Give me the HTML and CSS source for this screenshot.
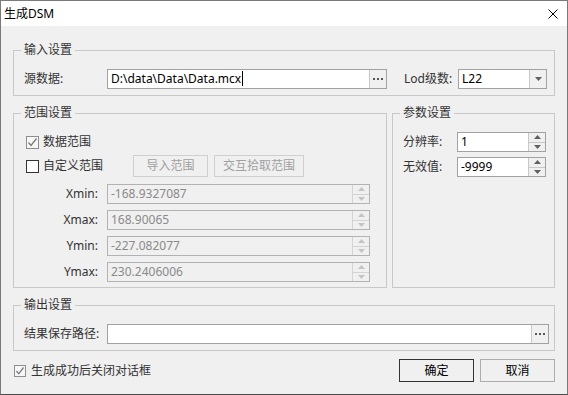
FILE: index.html
```html
<!DOCTYPE html>
<html lang="zh-CN">
<head>
  <meta charset="UTF-8" />
  <meta name="viewport" content="width=device-width, initial-scale=1.0"/>
  <title>生成DSM</title>
  <link rel="stylesheet" href="styles.css">
</head>
<body>
  <div class="window">
    <div class="titlebar">
      <span class="title">生成DSM</span>
      <svg class="close" width="10" height="10" viewBox="0 0 10 10">
        <path d="M0.5 0.5 L9.5 9.5 M9.5 0.5 L0.5 9.5" stroke="#000" stroke-width="1" fill="none"/>
      </svg>
    </div>

    <div class="content">
      <!-- 输入设置 -->
      <fieldset class="group group-input">
        <legend>输入设置</legend>
        <div class="row">
          <span class="lbl w83">源数据:</span>
          <div class="field file-field">
            <span class="text">D:\data\Data\Data.mcx<i class="caret"></i></span>
            <span class="side">
              <svg width="10" height="2" viewBox="0 0 10 2"><path d="M0 0h2v2H0zM4 0h2v2H4zM8 0h2v2H8z" fill="#555"/></svg>
            </span>
          </div>
          <span class="lbl lod">Lod级数:</span>
          <div class="field combo">
            <span class="text">L22</span>
            <span class="side">
              <svg width="7" height="4" viewBox="0 0 7 4"><path d="M0 0 L7 0 L3.5 4Z" fill="#606060"/></svg>
            </span>
          </div>
        </div>
      </fieldset>

      <div class="mid">
        <!-- 范围设置 -->
        <fieldset class="group group-range">
          <legend>范围设置</legend>
          <div class="check-row">
            <span class="check">
              <span class="box on">
                <svg width="11" height="11" viewBox="0 0 11 11"><polyline points="1.5,5.5 4,8.5 9.5,1.5" stroke="#7a7a7a" stroke-width="1.3" fill="none"/></svg>
              </span>
              数据范围
            </span>
          </div>
          <div class="check-row second">
            <span class="check custom">
              <span class="box"></span>
              自定义范围
            </span>
            <span class="btn off w75">导入范围</span>
            <span class="btn off w90">交互拾取范围</span>
          </div>

          <div class="coord-row">
            <span class="lbl coord">Xmin:</span>
            <div class="field off coord-field">
              <span class="text">-168.9327087</span>
              <span class="side spin">
                <span class="half"><svg width="7" height="4" viewBox="0 0 7 4"><path d="M0 4 L3.5 0 L7 4Z" fill="#c4c4c4"/></svg></span>
                <span class="half"><svg width="7" height="4" viewBox="0 0 7 4"><path d="M0 0 L7 0 L3.5 4Z" fill="#c4c4c4"/></svg></span>
              </span>
            </div>
          </div>
          <div class="coord-row">
            <span class="lbl coord">Xmax:</span>
            <div class="field off coord-field">
              <span class="text">168.90065</span>
              <span class="side spin">
                <span class="half"><svg width="7" height="4" viewBox="0 0 7 4"><path d="M0 4 L3.5 0 L7 4Z" fill="#c4c4c4"/></svg></span>
                <span class="half"><svg width="7" height="4" viewBox="0 0 7 4"><path d="M0 0 L7 0 L3.5 4Z" fill="#c4c4c4"/></svg></span>
              </span>
            </div>
          </div>
          <div class="coord-row">
            <span class="lbl coord">Ymin:</span>
            <div class="field off coord-field">
              <span class="text">-227.082077</span>
              <span class="side spin">
                <span class="half"><svg width="7" height="4" viewBox="0 0 7 4"><path d="M0 4 L3.5 0 L7 4Z" fill="#c4c4c4"/></svg></span>
                <span class="half"><svg width="7" height="4" viewBox="0 0 7 4"><path d="M0 0 L7 0 L3.5 4Z" fill="#c4c4c4"/></svg></span>
              </span>
            </div>
          </div>
          <div class="coord-row">
            <span class="lbl coord">Ymax:</span>
            <div class="field off coord-field">
              <span class="text">230.2406006</span>
              <span class="side spin">
                <span class="half"><svg width="7" height="4" viewBox="0 0 7 4"><path d="M0 4 L3.5 0 L7 4Z" fill="#c4c4c4"/></svg></span>
                <span class="half"><svg width="7" height="4" viewBox="0 0 7 4"><path d="M0 0 L7 0 L3.5 4Z" fill="#c4c4c4"/></svg></span>
              </span>
            </div>
          </div>
        </fieldset>

        <!-- 参数设置 -->
        <fieldset class="group group-param">
          <legend>参数设置</legend>
          <div class="param-row">
            <span class="lbl w54">分辨率:</span>
            <div class="field spin-field">
              <span class="text">1</span>
              <span class="side spin">
                <span class="half"><svg width="7" height="4" viewBox="0 0 7 4"><path d="M0 4 L3.5 0 L7 4Z" fill="#606060"/></svg></span>
                <span class="half"><svg width="7" height="4" viewBox="0 0 7 4"><path d="M0 0 L7 0 L3.5 4Z" fill="#606060"/></svg></span>
              </span>
            </div>
          </div>
          <div class="param-row">
            <span class="lbl w54">无效值:</span>
            <div class="field spin-field">
              <span class="text">-9999</span>
              <span class="side spin">
                <span class="half"><svg width="7" height="4" viewBox="0 0 7 4"><path d="M0 4 L3.5 0 L7 4Z" fill="#606060"/></svg></span>
                <span class="half"><svg width="7" height="4" viewBox="0 0 7 4"><path d="M0 0 L7 0 L3.5 4Z" fill="#606060"/></svg></span>
              </span>
            </div>
          </div>
        </fieldset>
      </div>

      <!-- 输出设置 -->
      <fieldset class="group group-output">
        <legend>输出设置</legend>
        <div class="row">
          <span class="lbl w83">结果保存路径:</span>
          <div class="field out-field">
            <span class="text"></span>
            <span class="side">
              <svg width="10" height="2" viewBox="0 0 10 2"><path d="M0 0h2v2H0zM4 0h2v2H4zM8 0h2v2H8z" fill="#555"/></svg>
            </span>
          </div>
        </div>
      </fieldset>

      <div class="footer">
        <span class="check small">
          <span class="box on">
            <svg width="10" height="10" viewBox="0 0 10 10"><polyline points="1.5,5 3.8,7.8 8.5,1.5" stroke="#7a7a7a" stroke-width="1.3" fill="none"/></svg>
          </span>
          生成成功后关闭对话框
        </span>
        <span class="btn primary w75">确定</span>
        <span class="btn normal w75">取消</span>
      </div>
    </div>
  </div>
</body>
</html>
```

FILE: styles.css
```css
* {
  margin: 0;
  padding: 0;
  box-sizing: border-box;
  font-family: "Noto Sans", "Noto Sans CJK SC", sans-serif;
}

body {
  width: 568px;
  height: 395px;
  background: #f0f0f0;
  font-size: 12px;
  line-height: 16px;
  color: #333;
  overflow: hidden;
}

.window {
  width: 568px;
  height: 395px;
  border: 1px solid #7a7a7a;
  border-bottom-color: #4a4a4a;
  background: #f0f0f0;
}

.titlebar {
  height: 25px;
  background: #fff;
  display: flex;
  align-items: center;
  justify-content: space-between;
  padding: 0 9px 0 3px;
  color: #000;
}

.content {
  padding: 16px 12px 0;
}

/* 分组框 */
.group {
  border: 1px solid #c8c8c8;
  padding: 11px 7px 6px 10px;
  min-width: 0;
}

.group legend {
  padding: 0 3px;
  margin-left: -3px;
  line-height: 16px;
  color: #333;
}

.row {
  display: flex;
  align-items: center;
  height: 20px;
}

.lbl {
  flex: none;
  white-space: nowrap;
}

.w83 { width: 83px; }
.w54 { width: 54px; }
.lod { width: 71px; padding-left: 17px; }

/* 输入框 */
.field {
  display: flex;
  height: 20px;
  border: 1px solid #a2a2a2;
  background: #fff;
  flex: none;
}

.field .text {
  flex: 1;
  padding: 0 3px;
  line-height: 18px;
  color: #000;
  white-space: nowrap;
  overflow: hidden;
}

.field .side {
  width: 17px;
  border-left: 1px solid #c8c8c8;
  background: #f0f0f0;
  display: flex;
  align-items: center;
  justify-content: center;
}

.caret {
  display: inline-block;
  width: 1px;
  height: 15px;
  background: #000;
  vertical-align: -3px;
  margin-left: 1px;
}

.file-field { width: 280px; }
.combo { width: 89px; }
.out-field { width: 442px; }

.side.spin {
  flex-direction: column;
  justify-content: stretch;
}

.spin .half {
  flex: 1;
  width: 100%;
  display: flex;
  align-items: center;
  justify-content: center;
}

.spin .half + .half {
  border-top: 1px solid #c8c8c8;
}

.field.off {
  border-color: #b2b2b2;
  background: #f0f0f0;
}

.field.off .text {
  color: #8a8a8a;
}

.field.off .side {
  border-left-color: #d4d4d4;
}

.field.off .half + .half {
  border-top-color: #d4d4d4;
}

/* 中间两栏 */
.mid {
  display: flex;
  gap: 5px;
  margin-top: 9px;
}

.group-range {
  width: 374px;
  padding: 11px 7px 5px 10px;
}

.group-param {
  width: 163px;
  padding: 11px 7px 5px 10px;
}

.check-row {
  display: flex;
  align-items: center;
  height: 20px;
  padding-left: 2px;
}

.check-row.second {
  height: 22px;
  margin-top: 3px;
}

.check {
  display: flex;
  align-items: center;
  gap: 4px;
  white-space: nowrap;
}

.check.custom {
  width: 107px;
}

.box {
  width: 13px;
  height: 13px;
  border: 1px solid #333;
  background: #fff;
  display: flex;
  align-items: center;
  justify-content: center;
  flex: none;
}

.box.on {
  border-color: #8e8e8e;
  background: #f7f7f7;
}

.check.small .box {
  width: 12px;
  height: 12px;
}

.btn {
  display: flex;
  align-items: center;
  justify-content: center;
  height: 22px;
  border: 1px solid #cfcfcf;
  background: #f0f0f0;
  flex: none;
}

.btn.off {
  color: #a0a0a0;
}

.btn.off + .btn.off {
  margin-left: 6px;
}

.w75 { width: 75px; }
.w90 { width: 90px; }

.coord-row {
  display: flex;
  align-items: center;
  height: 20px;
  margin-top: 6px;
}

.check-row.second + .coord-row {
  margin-top: 7px;
}

.lbl.coord {
  width: 83px;
  text-align: right;
  padding-right: 9px;
}

.coord-field { width: 263px; }

.param-row {
  display: flex;
  align-items: center;
  height: 20px;
}

.param-row + .param-row {
  margin-top: 5px;
}

.spin-field { width: 89px; }

.group-output {
  margin-top: 9px;
}

/* 底部按钮 */
.footer {
  display: flex;
  align-items: center;
  margin-top: 8px;
  padding-left: 1px;
  gap: 6px;
}

.footer .check {
  margin-right: auto;
  gap: 5px;
}

.footer .btn {
  height: 23px;
  color: #000;
}

.btn.primary {
  border-color: #333;
}

.btn.normal {
  border-color: #adadad;
}
```
